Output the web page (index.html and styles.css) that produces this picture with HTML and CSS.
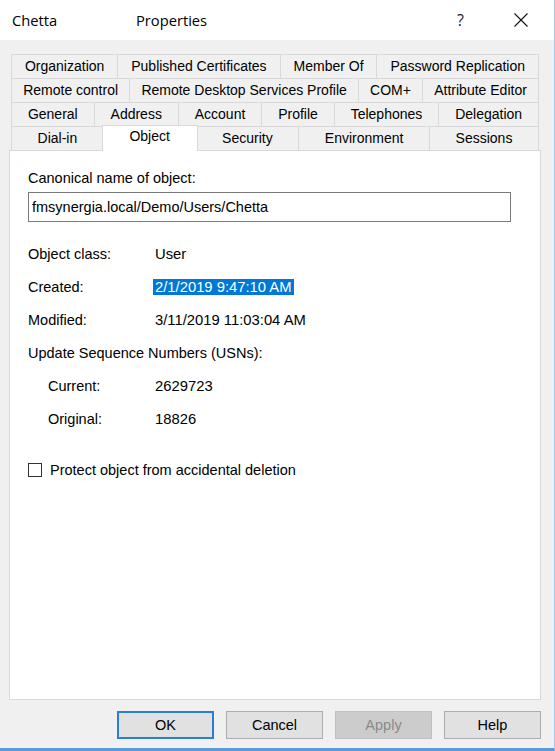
FILE: index.html
```html
<!DOCTYPE html>
<html lang="en">
<head>
<meta charset="utf-8">
<title>Chetta Properties</title>
<link rel="stylesheet" href="styles.css">
</head>
<body>
<div class="window">
  <div class="titlebar">
    <span class="t-name">Chetta</span>
    <span class="t-props">Properties</span>
    <span class="t-help">?</span>
    <span class="t-close">
      <svg width="14" height="14" viewBox="0 0 14 14"><path d="M0.5 0.5 L13.5 13.5 M13.5 0.5 L0.5 13.5" stroke="#111" stroke-width="1.1" fill="none"/></svg>
    </span>
  </div>
  <div class="client">
    <div class="tabs">
      <div class="tabrow">
        <div class="tab">Organization</div>
        <div class="tab">Published Certificates</div>
        <div class="tab">Member Of</div>
        <div class="tab">Password Replication</div>
      </div>
      <div class="tabrow">
        <div class="tab">Remote control</div>
        <div class="tab">Remote Desktop Services Profile</div>
        <div class="tab">COM+</div>
        <div class="tab">Attribute Editor</div>
      </div>
      <div class="tabrow">
        <div class="tab">General</div>
        <div class="tab">Address</div>
        <div class="tab">Account</div>
        <div class="tab">Profile</div>
        <div class="tab">Telephones</div>
        <div class="tab">Delegation</div>
      </div>
      <div class="tabrow">
        <div class="tab">Dial-in</div>
        <div class="tab active">Object</div>
        <div class="tab">Security</div>
        <div class="tab">Environment</div>
        <div class="tab">Sessions</div>
      </div>
    </div>
    <div class="panel">
      <div class="caption">Canonical name of object:</div>
      <div class="field">fmsynergia.local/Demo/Users/Chetta</div>
      <div class="info">
        <div class="label">Object class:</div><div class="value">User</div>
        <div class="label">Created:</div><div class="value"><span class="selected">2/1/2019 9:47:10 AM</span></div>
        <div class="label">Modified:</div><div class="value">3/11/2019 11:03:04 AM</div>
        <div class="label wide">Update Sequence Numbers (USNs):</div>
        <div class="label sub">Current:</div><div class="value">2629723</div>
        <div class="label sub">Original:</div><div class="value">18826</div>
      </div>
      <div class="check">
        <span class="box"></span>
        <span>Protect object from accidental deletion</span>
      </div>
    </div>
    <div class="buttons">
      <div class="btn default">OK</div>
      <div class="btn">Cancel</div>
      <div class="btn disabled">Apply</div>
      <div class="btn">Help</div>
    </div>
  </div>
</div>
</body>
</html>
```
FILE: styles.css
```css
* { box-sizing: border-box; }
html, body {
  margin: 0;
  padding: 0;
  background: #f0f0f0;
}
body {
  font-family: "Liberation Sans", Arial, sans-serif;
  font-size: 14.5px;
  color: #000;
}
.window {
  width: 555px;
  height: 751px;
  background: #f0f0f0;
  border-right: 1px solid #a9c8e8;
  border-bottom: 3px solid #5b9bdb;
  overflow: hidden;
}
.titlebar {
  height: 40px;
  background: #fff;
  display: flex;
  align-items: center;
  font-family: "Open Sans", "Noto Sans", sans-serif;
  font-size: 14.7px;
  color: #000;
}
.t-name {
  width: 136px;
  padding-left: 12px;
}
.t-props {
  flex: 1;
}
.t-help {
  width: 57px;
  font-size: 16px;
  color: #222;
}
.t-close {
  width: 40px;
  display: flex;
  align-items: center;
}
.client {
  padding: 14px 13px 0 9px;
}
.tabs {
  margin: 0 2px;
  font-size: 14px;
}
.tabrow {
  display: flex;
  height: 24px;
}
.tab {
  flex: 1 1 auto;
  white-space: nowrap;
  text-align: center;
  line-height: 23px;
  border-top: 1px solid #d9d9d9;
  border-left: 1px solid #d9d9d9;
  background: #f0f0f0;
}
.tab:last-child {
  border-right: 1px solid #d9d9d9;
}
.tab.active {
  position: relative;
  z-index: 1;
  background: transparent;
  border-color: transparent;
  line-height: 19px;
  padding-bottom: 4px;
}
.tab.active::before {
  content: "";
  position: absolute;
  left: -2px;
  right: -2px;
  top: -2px;
  bottom: -1px;
  background: #fff;
  border: 1px solid #d9d9d9;
  border-bottom: none;
  z-index: -1;
}
.panel {
  height: 550px;
  background: #fff;
  border: 1px solid #d9d9d9;
  padding: 19px 0 0 18px;
}
.caption {
  line-height: 17px;
}
.field {
  margin-top: 5px;
  width: 483px;
  height: 30px;
  border: 1px solid #7a7a7a;
  padding-left: 3px;
  line-height: 28px;
}
.info {
  margin-top: 15px;
  display: grid;
  grid-template-columns: 127px 1fr;
  grid-auto-rows: 33px;
  align-items: center;
}
.value {
  font-size: 14.8px;
}
.label.wide {
  grid-column: 1 / 3;
}
.label.sub {
  padding-left: 20px;
}
.selected {
  background: #0078d7;
  color: #fff;
  margin-left: -2px;
  padding: 0 2px;
}
.check {
  margin-top: 18px;
  height: 33px;
  display: flex;
  align-items: center;
  gap: 8px;
}
.box {
  width: 14px;
  height: 14px;
  border: 1px solid #333;
  background: #fff;
}
.buttons {
  margin-top: 11px;
  display: flex;
  justify-content: flex-end;
  gap: 12px;
}
.btn {
  width: 97px;
  height: 28px;
  line-height: 26px;
  text-align: center;
  background: #e1e1e1;
  border: 1px solid #adadad;
}
.btn.default {
  border: 2px solid #2a7fd4;
  line-height: 24px;
}
.btn.disabled {
  background: #cccccc;
  border-color: #bfbfbf;
  color: #8a8a8a;
}
```
